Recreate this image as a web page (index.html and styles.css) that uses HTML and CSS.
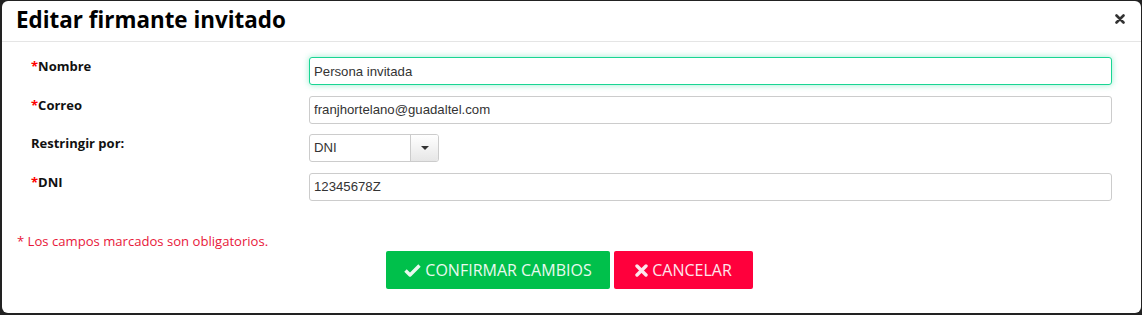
FILE: index.html
```html
<!DOCTYPE html>
<html lang="es">
<head>
    <meta charset="UTF-8">
    <meta name="viewport" content="width=device-width, initial-scale=1.0">
    <title>Editar firmante invitado</title>
    <link rel="stylesheet" href="styles.css">
</head>
<body>
    <div class="modal">
        <div class="modal-header">
            <h2>Editar firmante invitado</h2>
            <button class="close" type="button" aria-label="Cerrar">
                <svg width="10" height="10" viewBox="0 0 10 10"><path d="M1.5 1.5 L8.5 8.5 M8.5 1.5 L1.5 8.5" stroke="#333" stroke-width="2.6" stroke-linecap="round"/></svg>
            </button>
        </div>

        <form class="modal-body" id="signerForm">
            <div class="form-row">
                <label for="nombre"><span class="req">*</span>Nombre</label>
                <input type="text" id="nombre" class="focused" value="Persona invitada">
            </div>
            <div class="form-row">
                <label for="correo"><span class="req">*</span>Correo</label>
                <input type="text" id="correo" value="franjhortelano@guadaltel.com">
            </div>
            <div class="form-row">
                <label for="restringir">Restringir por:</label>
                <div class="select">
                    <span class="select-value">DNI</span>
                    <span class="select-arrow"></span>
                </div>
            </div>
            <div class="form-row">
                <label for="dni"><span class="req">*</span>DNI</label>
                <input type="text" id="dni" value="12345678Z">
            </div>
        </form>

        <div class="modal-footer">
            <p class="note">* Los campos marcados son obligatorios.</p>
            <div class="actions">
                <button type="button" class="button confirm">
                    <svg width="17" height="14" viewBox="0 0 17 14"><path d="M1.5 7.5 L6 12 L15.5 2.5" fill="none" stroke="#e9f9ef" stroke-width="3.4" stroke-linejoin="round"/></svg>
                    CONFIRMAR CAMBIOS
                </button>
                <button type="button" class="button cancel">
                    <svg width="13" height="13" viewBox="0 0 13 13"><path d="M2 2 L11 11 M11 2 L2 11" stroke="#fde6ec" stroke-width="3.4" stroke-linecap="round"/></svg>
                    CANCELAR
                </button>
            </div>
        </div>
    </div>
</body>
</html>
```

FILE: styles.css
```css
body {
    margin: 0;
    background-color: #222;
    font-family: 'Open Sans', sans-serif;
    color: #333;
}

.modal {
    margin: 1px 1px 2px 2px;
    height: 312px;
    background-color: #fff;
    border-radius: 6px;
    box-sizing: border-box;
}

.modal-header {
    display: flex;
    justify-content: space-between;
    align-items: center;
    height: 41px;
    padding: 0 16px 0 14px;
    border-bottom: 1px solid #e5e5e5;
    box-sizing: border-box;
}

.modal-header h2 {
    margin: 0;
    font-size: 22.4px;
    font-weight: bold;
    color: #000;
    line-height: 1;
    padding-bottom: 2px;
}

.close {
    background: none;
    border: none;
    padding: 0;
    margin-top: -5px;
    cursor: pointer;
    display: flex;
}

.modal-body {
    padding: 15px 29px 0 29px;
}

.form-row {
    display: flex;
    align-items: flex-start;
    margin-bottom: 10.6px;
}

.form-row label {
    width: 278px;
    flex-shrink: 0;
    font-size: 13px;
    font-weight: bold;
    color: #111;
    padding-top: 0;
    line-height: 18px;
}

.req {
    color: #f00;
}

input[type="text"] {
    flex: 1;
    height: 28px;
    padding: 0 4px;
    border: 1px solid #ccc;
    border-radius: 3px;
    box-sizing: border-box;
    font-family: 'Liberation Sans', Arial, sans-serif;
    font-size: 13.2px;
    color: #333;
    outline: none;
}

input.focused {
    border-color: #19d593;
    box-shadow: 0 0 6px rgba(25, 213, 147, 0.45);
}

.select {
    display: flex;
    width: 130px;
    height: 28px;
    border: 1px solid #ccc;
    border-radius: 3px;
    box-sizing: border-box;
    font-family: 'Liberation Sans', Arial, sans-serif;
    font-size: 13.2px;
    color: #333;
    overflow: hidden;
}

.select-value {
    flex: 1;
    padding: 0 4px;
    line-height: 26px;
}

.select-arrow {
    width: 27px;
    border-left: 1px solid #ccc;
    background: linear-gradient(#fff, #e6e6e6);
    position: relative;
}

.select-arrow::after {
    content: "";
    position: absolute;
    left: 10px;
    top: 11px;
    border-left: 4px solid transparent;
    border-right: 4px solid transparent;
    border-top: 4px solid #333;
}

.modal-footer {
    padding: 21px 19px 0 15px;
}

.note {
    margin: 0;
    font-size: 13.1px;
    color: #e8173a;
    line-height: 18px;
}

.actions {
    display: flex;
    justify-content: center;
    gap: 4px;
    margin-top: 1px;
}

.button {
    display: flex;
    align-items: center;
    gap: 4px;
    height: 38px;
    border: none;
    border-radius: 2px;
    font-family: 'Open Sans', sans-serif;
    font-size: 16px;
    cursor: pointer;
}

.confirm {
    width: 224px;
    justify-content: center;
    background-color: #00c04b;
    color: #e9f9ef;
}

.cancel {
    width: 139px;
    justify-content: center;
    background-color: #ff003c;
    color: #fde6ec;
}
```
